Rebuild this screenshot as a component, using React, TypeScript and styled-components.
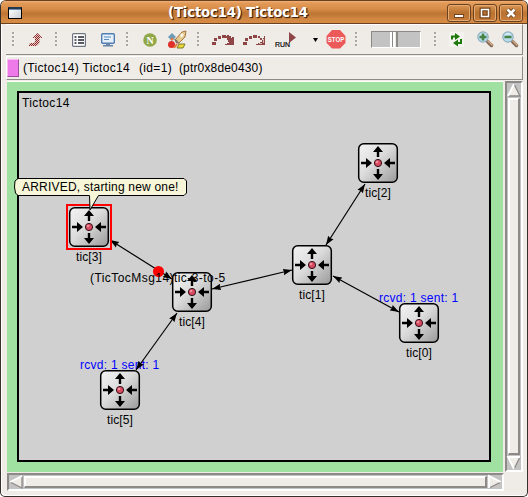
import React from "react";
import styled, { createGlobalStyle } from "styled-components";

const GlobalStyle = createGlobalStyle`
  html, body { margin: 0; padding: 0; background: #fff; overflow: hidden; }
  * { box-sizing: border-box; }
  svg { display: block; overflow: visible; }
`;

const Window = styled.div`
  width: 528px;
  height: 497px;
  display: flex;
  flex-direction: column;
  background: #efebe7;
  border: 1px solid #35302c;
  border-top-color: #6b4220;
  border-radius: 6px 6px 5px 5px;
  overflow: hidden;
  box-shadow: inset 1px -1px 0 #fff;
  font-family: "Liberation Sans", Arial, sans-serif;
  font-size: 12px;
  color: #000;
`;

const TitleBar = styled.div`
  height: 23px;
  flex: none;
  display: flex;
  align-items: center;
  padding: 0 4px 0 7px;
  background: linear-gradient(#f2b07a 0, #e29a58 2px, #d98e49 8px, #c47c3b 11px, #bf7634 13px, #d28843 18px, #d58b45 22px);
  border-bottom: 1px solid #6b4220;
`;

const WindowIcon = styled.div`
  width: 14px;
  height: 12px;
  margin-top: 2px;
  border: 1px solid #000;
  border-top: 2px solid #26384c;
  background: linear-gradient(135deg, #fff, #c9cfd4);
  box-shadow: inset 0 1px 0 #6b8cae;
`;

const Title = styled.div`
  flex: 1;
  margin-right: -61px;
  padding: 1px 54px 0 0;
  text-align: center;
  font: bold 13.3px/22px "DejaVu Sans", sans-serif;
  letter-spacing: -0.2px;
  color: #fff;
  text-shadow: 1px 1px 1px #42200a, 1px 1px 0 #6f451f;
  white-space: nowrap;
`;

const WindowButtons = styled.div`
  display: flex;
  gap: 2px;
  margin-top: 1px;
`;

const WindowButton = styled.div`
  width: 24px;
  height: 18px;
  border: 1px solid #6b4220;
  border-radius: 3px;
  box-shadow: inset 0 0 0 1px #e5aa72;
  background: linear-gradient(#dc9755, #b8712f 50%, #c87e3c);
`;

const Toolbar = styled.div`
  height: 31px;
  flex: none;
  margin: 0 4px 0 5px;
  padding: 0 0 0 6px;
  display: grid;
  grid-template-columns: 17px 26px 17px 29px 25px 17px 25px 29px 15px 31px 32px 38px 13px 29px 16px 63px 15px 28px 25px 18px;
  align-items: center;
  border-right: 1px solid #8c8986;
  border-bottom: 1px solid #8c8986;
  border-top: 1px solid #fff;
`;

const InfoBar = styled.div`
  height: 24px;
  flex: none;
  margin: 1px 4px 0 5px;
  display: flex;
  align-items: center;
  border-top: 1px solid #fff;
  border-left: 1px solid #fff;
  border-right: 1px solid #8c8986;
  border-bottom: 1px solid #8c8986;
`;

const ColorChip = styled.div`
  width: 12px;
  height: 18px;
  background: #ee7ae9;
  border: 1px solid #f6b9f2;
  border-right-color: #9c5099;
  border-bottom-color: #9c5099;
`;

const InfoText = styled.span<{ $gap: number; $track?: number }>`
  margin: -1px 0 0 ${(p) => p.$gap}px;
  line-height: 16px;
  letter-spacing: ${(p) => p.$track ?? 0.32}px;
  white-space: nowrap;
`;

const Workspace = styled.div`
  display: grid;
  grid-template-columns: 497px 18px;
  grid-template-rows: 391px 18px;
  gap: 1px;
  margin: 1px 0 0 6px;
`;

const Canvas = styled.div`
  position: relative;
  width: 496px;
  height: 391px;
  background: #a0e0a0;
  padding: 9px 12px 9px 10px;
  border-top: 1px solid #fff;
`;

const Network = styled.div`
  width: 474px;
  height: 371px;
  border: 2px solid #000;
  background: #d0d0d0;
  padding: 2px 3px;
  line-height: 16px;
  letter-spacing: 0.36px;
`;

const Drawing = styled.svg`
  position: absolute;
  left: 0;
  top: -1px;
`;

const Caption = styled.span<{ $x: number; $y: number; $color?: string; $center?: boolean; $track?: number }>`
  position: absolute;
  left: ${(p) => p.$x - 7}px;
  top: ${(p) => p.$y - 82}px;
  transform: ${(p) => (p.$center ? "translateX(-50%)" : "none")};
  color: ${(p) => p.$color ?? "#000"};
  letter-spacing: ${(p) => p.$track ?? 0.27}px;
  line-height: 14px;
  white-space: nowrap;
`;

const Scrollbar = styled.div<{ $vertical?: boolean }>`
  display: flex;
  flex-direction: ${(p) => (p.$vertical ? "column" : "row")};
  background: #c3c3c3;
  border: 2px solid #fff;
  border-left-color: #8c8986;
  border-top-color: #8c8986;
  min-width: 0;
  width: ${(p) => (p.$vertical ? "18px" : "497px")};
`;

const Thumb = styled.div`
  flex: 1;
  background: #efebe7;
  border: 1px solid #fff;
  border-right: 2px solid #8c8986;
  border-bottom: 2px solid #8c8986;
  box-shadow: inset 1px 1px 0 #fff;
  margin: 1px;
`;

const Handle = styled.div`
  width: 3px;
  height: 16px;
  background: radial-gradient(circle at 1px 1px, #aaa69f 1px, #fff 1.3px, transparent 1.7px) 0 0 / 3px 4px;
`;

const SpeedSlider = styled.div`
  width: 50px;
  height: 17px;
  background: #c3c3c3;
  border: 1px solid #8c8986;
  border-right-color: #fff;
  border-bottom-color: #fff;
  padding-left: 18px;
`;

const SliderKnob = styled.div`
  width: 8px;
  height: 15px;
  background: linear-gradient(90deg, #fff 0 2px, #8c8986 2px 3px, #fff 3px 5px, #efebe7 5px 6px, #8c8986 6px);
`;

const StepIcon = ({ dots }: { dots: boolean }) => (
  <svg width="23" height="12" viewBox="0 0 23 12" fill="#8e4545" shapeRendering="crispEdges">
    <path d="M0 8h4v3H0zM2 4h3v3H2zM6 2h3v3H6zM10 1h4v3h-4z" />
    {dots ? (
      <path d="M15 2h2v2h-2zM17 4h2v2h-2zM21 2h1v9h-9v-1h2V9h2V8h2V6h1V4h1z" />
    ) : (
      <path d="M15 1h2v1h2v2h1V3h2v8h-9v-1h2V9h2V8h-1V6h-1V4h-1z" />
    )}
    {dots && <path d="M20 5h1v4h-1zM16 9h3v1h-3z" fill="#d3b6b2" />}
  </svg>
);

const ZoomIcon = ({ plus }: { plus: boolean }) => (
  <svg width="17" height="17" viewBox="0 0 17 17">
    <path d="M10.500 10.500l4 4" stroke="#806754" strokeWidth="3.500" strokeLinecap="round" />
    <path d="M11 10l4 4" stroke="#d6ad88" strokeWidth="1.500" strokeLinecap="round" />
    <circle cx="6" cy="6" r="5.200" fill="#b8dcec" stroke="#8eafc0" strokeWidth="1.200" />
    <path d="M3 4.400c1-2 4-2.500 5.500-1" stroke="#e9f8ff" fill="none" />
    <path d={plus ? "M2.500 6h7M6 2.500v7" : "M2.500 6h7"} stroke="#478246" strokeWidth="2.600" />
  </svg>
);

const ScrollArrow = ({ dir }: { dir: "up" | "down" | "left" | "right" }) => {
  const shapes = {
    up: { fill: "M7 1l6 12H1z", light: "M1 13L7 1", dark: "M7 1l6 12H1" },
    down: { fill: "M7 13L1 1h12z", light: "M7 13L1 1h12", dark: "M13 1L7 13" },
    left: { fill: "M1 7l12-6v12z", light: "M1 7l12-6", dark: "M13 1v12L1 7" },
    right: { fill: "M13 7L1 1v12z", light: "M13 7L1 1v12", dark: "M1 13l12-6" },
  }[dir];
  return (
    <svg width="14" height="14" viewBox="0 0 14 14" fill="none" flexShrink="0">
      <path d={shapes.fill} fill="#efebe7" />
      <path d={shapes.dark} stroke="#8c8986" strokeWidth="1.300" />
      <path d={shapes.light} stroke="#fff" strokeWidth="1.800" />
    </svg>
  );
};

const nodes = [
  { id: 3, x: 89, y: 227 },
  { id: 4, x: 192, y: 292 },
  { id: 1, x: 312, y: 265 },
  { id: 2, x: 378, y: 163 },
  { id: 0, x: 419, y: 323 },
  { id: 5, x: 120, y: 390 },
];

const links = [
  [110, 240, 172, 279],
  [212, 289, 292, 270],
  [326, 245, 365, 184],
  [333, 276, 399, 312],
  [177, 313, 136, 370],
];

const NodeIcon = ({ x, y }: { x: number; y: number }) => (
  <g transform={`translate(${x} ${y})`}>
    <rect x="-19.300" y="-19.300" width="38.600" height="38.600" rx="5" fill="url(#metal)" stroke="#000" strokeWidth="1.500" />
    {[0, 180].map((a) => (
      <path key={a} transform={`rotate(${a})`} d="M0-17l5 6H1.200v5h-2.400v-5H-5z" />
    ))}
    {[90, 270].map((a) => (
      <path key={a} transform={`rotate(${a})`} d="M0-6l5-6H1.200v-5h-2.400v5H-5z" />
    ))}
    <circle r="3.600" fill="#d84a60" stroke="#301018" />
    <circle cx="-1" cy="-1" r="1.300" fill="#ef909c" />
  </g>
);

const App = () => (
  <>
    <GlobalStyle />
    <Window>
      <TitleBar>
        <WindowIcon />
        <Title>(Tictoc14) Tictoc14</Title>
        <WindowButtons>
          <WindowButton>
            <svg width="22" height="16"><path d="M6 9h10v4H6z" fill="#74451d" /><path d="M7 10h8v2H7z" fill="#fff" /></svg>
          </WindowButton>
          <WindowButton>
            <svg width="22" height="16" fill="none"><path d="M7.500 4.500h7v7h-7z" stroke="#74451d" strokeWidth="4" /><path d="M7.500 4.500h7v7h-7z" stroke="#fff" strokeWidth="1.500" /></svg>
          </WindowButton>
          <WindowButton>
            <svg width="22" height="16" fill="none"><path d="M7.500 4.500l7 7m0-7l-7 7" stroke="#74451d" strokeWidth="4.500" /><path d="M7.500 4.500l7 7m0-7l-7 7" stroke="#fff" strokeWidth="2.600" /></svg>
          </WindowButton>
        </WindowButtons>
      </TitleBar>

      <Toolbar>
        <Handle />
        <svg width="14" height="14" viewBox="0 0 14 14">
          <defs>
            <pattern id="dither" width="2" height="2" patternUnits="userSpaceOnUse">
              <rect width="2" height="2" fill="#e6c9c5" />
              <path d="M0 0h1v1H0zM1 1h1v1H1z" fill="#8e2929" />
            </pattern>
          </defs>
          <path d="M8.500 0l5 5h-3v5l-3 3H0v-2l2-1h3l1-1V5H3.500z" fill="url(#dither)" />
        </svg>
        <Handle />
        <svg width="14" height="14" viewBox="0 0 14 14">
          <rect x=".6" y=".6" width="12.800" height="12.800" rx="1" fill="#fff" stroke="#6f7580" strokeWidth="1.200" />
          <path d="M2.500 4h2M2.500 7h2M2.500 10h2M6 4h6M6 7h6M6 10h6" stroke="#20242c" strokeWidth="1.500" />
        </svg>
        <svg width="14" height="14" viewBox="0 0 14 14">
          <rect x=".7" y=".7" width="12.600" height="9.600" rx="1" fill="#e5f0fb" stroke="#507eb2" strokeWidth="1.400" />
          <path d="M3 4h7M3 6.500h5" stroke="#5c8bbf" />
          <path d="M5 10h4v2h3v1.500H2V12h3z" fill="#6685a9" />
        </svg>
        <Handle />
        <svg width="14" height="14" viewBox="0 0 14 14">
          <circle cx="7" cy="7" r="6.800" fill="#91a849" />
          <text x="7" y="10.600" textAnchor="middle" fontFamily="Liberation Serif" fontSize="10" fontWeight="bold" fill="#fff">N</text>
        </svg>
        <svg width="20" height="18" viewBox="0 0 20 18">
          <path d="M4 2l4 4-4 4-4-4z" fill="#6c9bb9" />
          <path d="M7 9l7-8 4-1-1 6-6 6-2-1z" fill="#e4c98c" stroke="#a77542" />
          <path d="M12 4l2-2 2 2-3 3z" fill="#f7f4e4" />
          <path d="M6 8l3 1 2 4-3-1z" fill="#7c7169" />
          <circle cx="3.500" cy="13.500" r="3.500" fill="#df3029" />
          <path d="M9 13l-3 4M5 7L3 9" stroke="#e87937" strokeWidth="2" />
          <path d="M11 13h6l-2 4H9z" fill="#e8da34" stroke="#827a2b" />
        </svg>
        <Handle />
        <StepIcon dots={false} />
        <StepIcon dots />
        <svg width="22" height="17" viewBox="0 0 22 17">
          <path d="M14 1l7 5.500-7 5.500z" fill="#8e4545" />
          <text x="0" y="16" fontFamily="Liberation Sans" fontSize="7.500" textLength="15" lengthAdjust="spacingAndGlyphs" stroke="#000" strokeWidth=".2">RUN</text>
        </svg>
        <svg width="5" height="4" viewBox="0 0 5 4"><path d="M0 0h5L2.500 4z" /></svg>
        <svg width="20" height="19" viewBox="0 0 20 19">
          <path d="M6 0h8l5.500 6v7L14 18.500H6L.500 13V6z" fill="#eb5a58" />
          <text x="1.800" y="12.300" fontFamily="Liberation Sans" fontSize="7.500" fontWeight="bold" textLength="16.500" lengthAdjust="spacingAndGlyphs" fill="#fff">STOP</text>
        </svg>
        <Handle />
        <SpeedSlider><SliderKnob /></SpeedSlider>
        <Handle />
        <svg width="15" height="15" viewBox="0 0 15 15">
          <rect width="15" height="15" fill="#f5f3ef" />
          <path d="M3 7.500V4.500h4M12 7v4H8" fill="none" stroke="#1d790a" strokeWidth="2" />
          <path d="M6 1l5 3.500L6 8zM9 7.500L4 11l5 3.500z" fill="#1d790a" />
        </svg>
        <ZoomIcon plus />
        <ZoomIcon plus={false} />
      </Toolbar>

      <InfoBar>
        <ColorChip />
        <InfoText $gap={4}>(Tictoc14) Tictoc14</InfoText>
        <InfoText $gap={9}>(id=1)</InfoText>
        <InfoText $gap={7} $track={0.16}>(ptr0x8de0430)</InfoText>
      </InfoBar>

      <Workspace>
        <Canvas>
          <Network>Tictoc14</Network>
          <Caption $x={379} $y={291} $color="#0000ff">rcvd: 1 sent: 1</Caption>
          <Caption $x={80} $y={358} $color="#0000ff">rcvd: 1 sent: 1</Caption>
          <Drawing width="496" height="391" viewBox="7 81 496 391">
            <defs>
              <linearGradient id="metal" x1="0" y1="0" x2="1" y2="1">
                <stop offset="0" stopColor="#f4f4f4" />
                <stop offset=".45" stopColor="#dcdcdc" />
                <stop offset="1" stopColor="#999" />
              </linearGradient>
              <marker id="tip" markerUnits="userSpaceOnUse" markerWidth="10" markerHeight="8" refX="9" refY="4" orient="auto-start-reverse">
                <path d="M9 4L0 .800 1 4 0 7.200z" />
              </marker>
            </defs>
            {nodes.map((n) => <NodeIcon key={n.id} x={n.x} y={n.y} />)}
            {links.map(([x1, y1, x2, y2]) => (
              <line key={`${x1}-${y1}`} x1={x1} y1={y1} x2={x2} y2={y2} stroke="#000" strokeWidth="1.200" markerStart="url(#tip)" markerEnd="url(#tip)" />
            ))}
            <rect x="67" y="205" width="44" height="44" fill="none" stroke="#f00" strokeWidth="2" />
            <circle cx="158.500" cy="271.500" r="5.500" fill="#f00" />
            <path d="M18 178.500H184l2.500 2.500v12l-2.500 2.500H98.500L90 210l-.5-14.500H18L15.500 193l-1-6 .5-6z" fill="#f8f6d8" stroke="#000" />
          </Drawing>
          {nodes.map((n) => (
            <Caption key={n.id} $x={n.x} $y={n.y + 23} $center $track={0.1}>{`tic[${n.id}]`}</Caption>
          ))}
          <Caption $x={90} $y={271} $track={0.44}>(TicTocMsg14)tic-3-to-5</Caption>
          <Caption $x={22} $y={180} $track={0.2}>ARRIVED, starting new one!</Caption>
        </Canvas>
        <Scrollbar $vertical>
          <ScrollArrow dir="up" />
          <Thumb />
          <ScrollArrow dir="down" />
        </Scrollbar>
        <Scrollbar>
          <ScrollArrow dir="left" />
          <Thumb />
          <ScrollArrow dir="right" />
        </Scrollbar>
      </Workspace>
    </Window>
  </>
);

export default App;
